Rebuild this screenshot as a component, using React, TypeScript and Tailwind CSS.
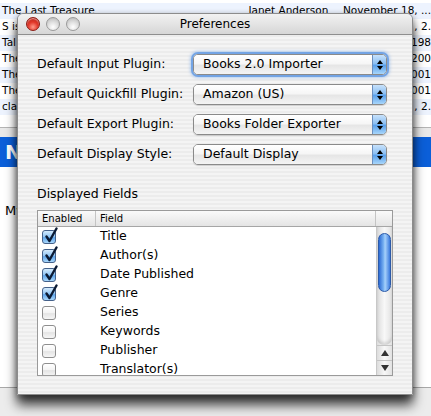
import React from "react";

const bgRows = [
  { title: "The Last Treasure", tail: "" },
  { title: "S is", tail: ", 2." },
  { title: "Tal", tail: "198" },
  { title: "The", tail: "200" },
  { title: "The", tail: "001" },
  { title: "The", tail: "001" },
  { title: "cla", tail: ", 2." },
];

const plugins = [
  { label: "Default Input Plugin:", value: "Books 2.0 Importer", focused: true },
  { label: "Default Quickfill Plugin:", value: "Amazon (US)", focused: false },
  { label: "Default Export Plugin:", value: "Books Folder Exporter", focused: false },
  { label: "Default Display Style:", value: "Default Display", focused: false },
];

const fields = [
  { name: "Title", on: true },
  { name: "Author(s)", on: true },
  { name: "Date Published", on: true },
  { name: "Genre", on: true },
  { name: "Series", on: false },
  { name: "Keywords", on: false },
  { name: "Publisher", on: false },
  { name: "Translator(s)", on: false },
];

const Light = ({ red }: { red?: boolean }) => (
  <div
    className={
      red
        ? "w-[14px] h-[14px] rounded-full border border-[#8c1a12] bg-[radial-gradient(circle_at_50%_75%,#ff9a8a_0%,#e2382a_45%,#a81c12_100%)] shadow-[inset_0_1px_1px_rgba(255,255,255,0.6)]"
        : "w-[14px] h-[14px] rounded-full border border-[#9a9a9a] bg-[radial-gradient(circle_at_50%_75%,#ffffff_0%,#e0e0e0_45%,#b4b4b4_100%)]"
    }
  />
);

const Popup = ({ value, focused }: { value: string; focused: boolean }) => (
  <div
    className={
      "flex h-[21px] w-[194px] rounded-[5px] border border-[#8a8a8a] overflow-hidden " +
      (focused ? "shadow-[0_0_0_2px_rgba(92,150,226,0.75),0_0_3px_3px_rgba(120,170,235,0.5)]" : "shadow-[0_1px_1px_rgba(0,0,0,0.15)]")
    }
  >
    <div className="flex-1 flex items-center pl-[9px] bg-[linear-gradient(#ffffff_0%,#f6f6f6_45%,#e6e6e6_55%,#f4f4f4_100%)] text-[12.5px] text-black">
      {value}
    </div>
    <div className="w-[14px] flex flex-col items-center justify-center gap-[2px] border-l border-[#6b8fbf] bg-[linear-gradient(#c8e2fb_0%,#8cc0f4_45%,#5aa0ea_55%,#a8d6fb_100%)]">
      <div className="w-0 h-0 border-l-[3px] border-r-[3px] border-b-[4px] border-l-transparent border-r-transparent border-b-black" />
      <div className="w-0 h-0 border-l-[3px] border-r-[3px] border-t-[4px] border-l-transparent border-r-transparent border-t-black" />
    </div>
  </div>
);

const Check = ({ on }: { on: boolean }) =>
  on ? (
    <div className="relative w-[14px] h-[14px] rounded-[3px] border border-[#44618a] bg-[linear-gradient(#d4ebfd_0%,#8ec4f5_50%,#5ea5eb_55%,#a9d7fb_100%)]">
      <svg className="absolute left-[1px] -top-[4px]" width="14" height="16" viewBox="0 0 14 16">
        <path d="M2.5 9.5 L5.5 14 L12.5 1.5" fill="none" stroke="#0b1a33" strokeWidth="2.4" strokeLinecap="round" strokeLinejoin="round" />
      </svg>
    </div>
  ) : (
    <div className="w-[14px] h-[14px] rounded-[3px] border border-[#8e8e8e] bg-[linear-gradient(#ffffff_0%,#f3f3f3_50%,#e4e4e4_55%,#f6f6f6_100%)]" />
  );

export default function App() {
  return (
    <div className="relative w-[431px] h-[416px] overflow-hidden bg-white font-['DejaVu_Sans',sans-serif] text-black">
      {/* background window */}
      <div className="flex flex-col h-full">
        <div className="pt-[3px]">
          {bgRows.map((r, i) => (
            <div
              key={i}
              className={"flex items-center h-[16px] text-[10.5px] whitespace-nowrap " + (i % 2 === 0 ? "bg-[#edf3fe]" : "bg-white")}
            >
              <div className="w-[250px] pl-[2px] overflow-hidden">{r.title}</div>
              {i === 0 ? (
                <>
                  <div className="w-[98px] pl-[2px]">Janet Anderson</div>
                  <div>November 18, ...</div>
                </>
              ) : (
                <>
                  <div className="w-[166px]" />
                  <div>{r.tail}</div>
                </>
              )}
            </div>
          ))}
        </div>
        <div className="h-[12px]" />
        <div className="h-[10px] border-t border-[#b4b4b4] bg-[#e9e9e9]" />
        <div className="h-[30px] bg-[#0b5fd9] flex items-center pl-[5px] text-white font-bold text-[20px]">
          N
        </div>
        <div className="h-[34px]" />
        <div className="pl-[5px] text-[13px]">My</div>
        <div className="flex-1" />
        <div className="h-[29px] border-t border-[#a8a8a8] bg-[#ececec]" />
      </div>

      {/* preferences window */}
      <div className="absolute left-[17px] top-[13px] w-[396px] h-[382px] flex flex-col rounded-t-[6px] border border-[#8c8c8c] shadow-[0_10px_12px_rgba(0,0,0,0.75),0_2px_6px_rgba(0,0,0,0.35)]">
        <div className="relative h-[21px] flex items-center justify-center rounded-t-[6px] border-b border-[#8e8e8e] bg-[linear-gradient(#f2f2f2,#d6d6d6)]">
          <div className="absolute left-[8px] top-[3px] flex gap-[6px]">
            <Light red />
            <Light />
            <Light />
          </div>
          <span className="text-[12px]">Preferences</span>
        </div>

        <div className="flex-1 flex flex-col pl-[19px] pt-[19px] bg-[repeating-linear-gradient(180deg,#ececec_0px,#ececec_2px,#f4f4f4_2px,#f4f4f4_4px)]">
          <div className="flex flex-col gap-[9px]">
            {plugins.map((p) => (
              <div key={p.label} className="flex items-center h-[21px]">
                <div className="w-[156px] text-[12.5px]">{p.label}</div>
                <Popup value={p.value} focused={p.focused} />
              </div>
            ))}
          </div>

          <div className="mt-[21px] h-[16px] leading-[16px] text-[12.5px]">Displayed Fields</div>

          <div className="mt-[8px] w-[356px] h-[166px] flex flex-col border border-[#9a9a9a] bg-white overflow-hidden">
            <div className="flex h-[16px] border-b border-[#a6a6a6] bg-[linear-gradient(#fafafa,#e4e4e4)] text-[10px]">
              <div className="w-[58px] pl-[4px] flex items-center border-r border-[#c4c4c4]">Enabled</div>
              <div className="flex-1 pl-[4px] flex items-center border-r border-[#c4c4c4]">Field</div>
              <div className="w-[16px]" />
            </div>
            <div className="flex flex-1 overflow-hidden">
              <div className="flex-1 flex flex-col">
                {fields.map((f) => (
                  <div key={f.name} className="flex items-center h-[19px] shrink-0">
                    <div className="w-[58px] pl-[4px]">
                      <Check on={f.on} />
                    </div>
                    <div className="pl-[4px] text-[12.5px]">{f.name}</div>
                  </div>
                ))}
              </div>
              <div className="w-[16px] flex flex-col border-l border-[#c8c8c8] bg-[linear-gradient(90deg,#dcdcdc,#f8f8f8_50%,#e2e2e2)]">
                <div className="flex-1 flex flex-col items-center pt-[6px] rounded-b-[7px] shadow-[inset_0_-3px_3px_rgba(0,0,0,0.12)]">
                  <div className="w-[13px] h-[59px] rounded-full border border-[#2c5aa8] bg-[linear-gradient(90deg,#2b6ad4,#7fb8f4_45%,#a8d2fb_55%,#3a7ade)]" />
                </div>
                <div className="h-[15px] flex items-center justify-center border-t border-[#c4c4c4]">
                  <div className="w-0 h-0 border-l-[4px] border-r-[4px] border-b-[6px] border-l-transparent border-r-transparent border-b-[#333]" />
                </div>
                <div className="h-[15px] flex items-center justify-center border-t border-[#c4c4c4]">
                  <div className="w-0 h-0 border-l-[4px] border-r-[4px] border-t-[6px] border-l-transparent border-r-transparent border-t-[#333]" />
                </div>
              </div>
            </div>
          </div>
        </div>
      </div>
    </div>
  );
}
